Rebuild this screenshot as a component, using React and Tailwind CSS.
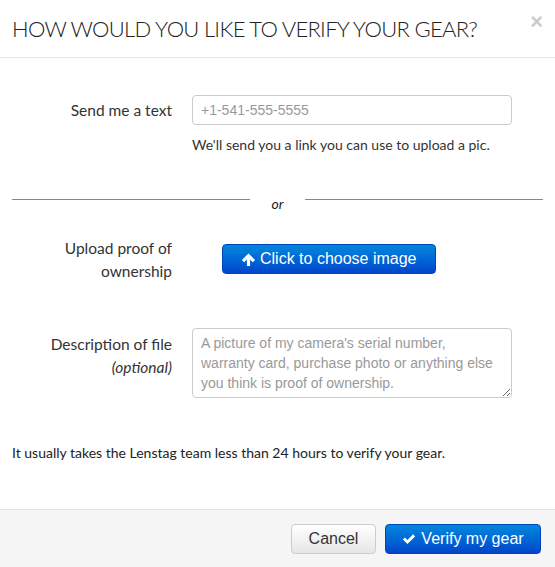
import React from 'react'

const lato = { fontFamily: 'Lato, "Open Sans", sans-serif' }
const helv = { fontFamily: '"Liberation Sans", Arial, sans-serif' }

const ArrowUp = () => (
  <svg viewBox="0 0 16 16" className="w-[15px] h-[15px] mr-[4px]" fill="currentColor">
    <path d="M8 1.5 L15 8.5 L12.6 10.9 L9.7 8 V15 H6.3 V8 L3.4 10.9 L1 8.5 Z" />
  </svg>
)

const Check = () => (
  <svg viewBox="0 0 16 16" className="w-[14px] h-[14px] mr-[5px]" fill="currentColor">
    <path d="M1 8.6 L3.3 6.3 L6.2 9.2 L12.7 2.7 L15 5 L6.2 13.8 Z" />
  </svg>
)

const Label = ({ children }) => (
  <div className="w-[160px] shrink-0 text-right text-[15.5px] leading-[23px] text-[#333]">
    {children}
  </div>
)

export default function App() {
  return (
    <div className="w-[555px] h-[567px] bg-white flex flex-col overflow-hidden" style={lato}>
      {/* Header */}
      <div className="h-[58px] border-b border-[#e5e5e5] flex items-start justify-between pl-[12px] pr-[12px]">
        <h3 className="mt-[15px] whitespace-nowrap text-[22px] leading-[28px] font-light text-[#222] tracking-[-0.7px]">
          HOW WOULD YOU LIKE TO VERIFY YOUR GEAR?
        </h3>
        <button className="mt-[11px] text-[22px] leading-[22px] font-bold text-[#ccc]" style={helv}>
          ×
        </button>
      </div>

      {/* Body */}
      <div className="flex-1 px-[12px]">
        <div className="flex items-start gap-[20px] mt-[37px]">
          <Label><div className="mt-[4px]">Send me a text</div></Label>
          <div className="w-[320px]">
            <input
              type="text"
              placeholder="+1-541-555-5555"
              className="w-full h-[30px] px-[8px] border border-[#ccc] rounded-[4px] text-[14px] text-[#555] placeholder-[#999] outline-none"
              style={helv}
            />
            <p className="mt-[10px] text-[14px] leading-[20px] text-[#333]">
              We'll send you a link you can use to upload a pic.
            </p>
          </div>
        </div>

        <div className="flex items-center mt-[30px]">
          <div className="flex-1 border-t border-[#888]" />
          <span className="w-[55px] text-center text-[14px] italic text-[#222] mt-[8px]">or</span>
          <div className="flex-1 border-t border-[#888]" />
        </div>

        <div className="flex items-start gap-[50px] mt-[23px]">
          <Label>Upload proof of<br />ownership</Label>
          <button
            className="mt-[7px] h-[30px] px-[18px] flex items-center rounded-[4px] border border-[#0044bb] text-white text-[16px] bg-gradient-to-b from-[#0088dd] to-[#0044cc]"
            style={helv}
          >
            <ArrowUp />
            Click to choose image
          </button>
        </div>

        <div className="flex items-start gap-[20px] mt-[45px]">
          <Label>
            <div className="mt-[5px]">Description of file</div>
            <div className="italic">(optional)</div>
          </Label>
          <textarea
            rows={3}
            placeholder="A picture of my camera's serial number, warranty card, purchase photo or anything else you think is proof of ownership."
            className="w-[320px] h-[70px] px-[8px] pt-[4px] pb-[3px] border border-[#ccc] rounded-[4px] text-[14px] leading-[20px] text-[#555] placeholder-[#999] outline-none resize-y"
            style={helv}
          />
        </div>

        <p className="mt-[45px] text-[14px] leading-[20px] text-[#222]">
          It usually takes the Lenstag team less than 24 hours to verify your gear.
        </p>
      </div>

      {/* Footer */}
      <div className="h-[58px] border-t border-[#e5e5e5] bg-[#f5f5f5] flex items-center justify-end gap-[9px] pr-[14px]">
        <button
          className="h-[30px] w-[85px] rounded-[4px] border border-[#ccc] bg-gradient-to-b from-white to-[#e6e6e6] text-[16px] text-[#333]"
          style={helv}
        >
          Cancel
        </button>
        <button
          className="h-[30px] w-[156px] flex items-center justify-center rounded-[4px] border border-[#0044bb] text-white text-[16px] bg-gradient-to-b from-[#0088dd] to-[#0044cc]"
          style={helv}
        >
          <Check />
          Verify my gear
        </button>
      </div>
    </div>
  )
}
